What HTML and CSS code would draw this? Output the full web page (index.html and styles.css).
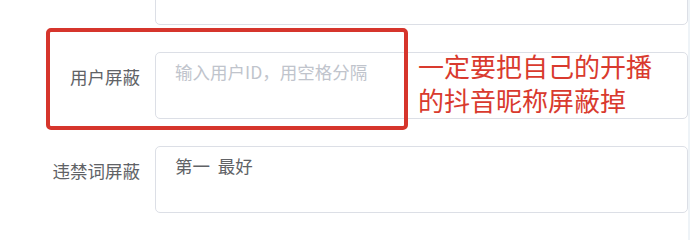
FILE: index.html
```html
<!DOCTYPE html>
<html lang="zh-CN">
<head>
<meta charset="utf-8">
<link rel="stylesheet" href="styles.css">
</head>
<body>
<div class="page">
  <form class="form">
    <div class="item first">
      <label class="label"></label>
      <textarea class="input" rows="2"></textarea>
    </div>
    <div class="item">
      <label class="label">用户屏蔽</label>
      <textarea class="input" rows="2" placeholder="输入用户ID，用空格分隔"></textarea>
    </div>
    <div class="item">
      <label class="label">违禁词屏蔽</label>
      <textarea class="input" rows="2">第一  最好</textarea>
    </div>
  </form>
  <div class="highlight"></div>
  <div class="note">一定要把自己的开播<br>的抖音昵称屏蔽掉</div>
</div>
</body>
</html>
```
FILE: styles.css
```css
html, body {
  margin: 0;
  padding: 0;
}
body {
  background: #eef3f7;
  overflow: hidden;
}
.page {
  position: relative;
  width: 688px;
  min-height: 100vh;
  background: #ffffff;
  overflow: hidden;
  font-family: "Noto Sans CJK SC", "Noto Sans", sans-serif;
}
.form {
  margin: 0;
}
.item {
  display: flex;
  align-items: flex-start;
  margin-bottom: 27px;
}
.item.first {
  margin-top: -42px;
}
.label {
  width: 155px;
  flex: none;
  box-sizing: border-box;
  padding-right: 15px;
  text-align: right;
  font-size: 17.5px;
  line-height: 50px;
  color: #606266;
}
.input {
  flex: 1;
  min-width: 0;
  display: block;
  box-sizing: border-box;
  height: 67px;
  margin: 0;
  padding: 6px 18px 6px 19px;
  border: 1px solid #dcdfe6;
  border-radius: 5px;
  font-family: "Noto Sans CJK SC", "Noto Sans", sans-serif;
  font-size: 17.5px;
  line-height: 26px;
  color: #606266;
  resize: none;
  outline: none;
  background: #fff;
  white-space: pre-wrap;
}
.input::placeholder {
  color: #c0c4cc;
}
.highlight {
  position: absolute;
  left: 46px;
  top: 28px;
  width: 362px;
  height: 102px;
  box-sizing: border-box;
  border: 4px solid #d6352c;
  border-radius: 5px;
}
.note {
  position: absolute;
  left: 418px;
  top: 49px;
  font-size: 26px;
  line-height: 34px;
  color: #d93a2e;
  white-space: nowrap;
}
```
